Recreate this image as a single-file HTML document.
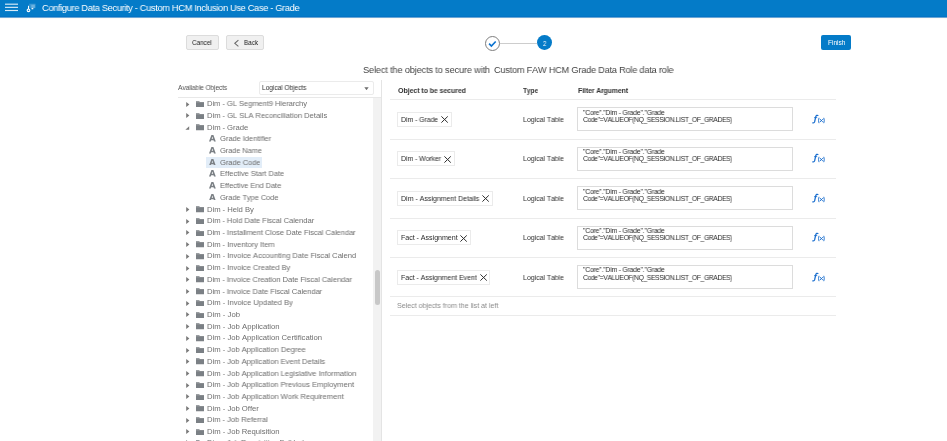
<!DOCTYPE html>
<html><head><meta charset="utf-8"><style>
html,body{margin:0;padding:0;background:#fff;width:947px;height:441px;overflow:hidden;position:relative}
body{font-family:"Liberation Sans",sans-serif;font-kerning:none}
.t{position:absolute;white-space:nowrap;transform-origin:0 0;will-change:transform}
.r{position:absolute}
</style></head><body>
<div class="r" style="left:0.00px;top:0.00px;width:947.00px;height:16.00px;background:#047bc8;"></div>
<div class="r" style="left:0.00px;top:16.00px;width:947.00px;height:1.00px;background:#0474c4;"></div>
<div class="r" style="left:0.00px;top:17.00px;width:947.00px;height:1.00px;background:#6aa6d6;"></div>
<div class="r" style="left:0.00px;top:18.00px;width:947.00px;height:1.00px;background:#fdfbf6;"></div>
<svg class="r" style="left:0;top:0;width:24px;height:16px" viewBox="0 0 24 16"><g stroke="#fff" stroke-opacity=".85" stroke-width="1.15"><line x1="5" y1="4.2" x2="18" y2="4.2"/><line x1="5" y1="7.35" x2="18" y2="7.35"/><line x1="5" y1="10.5" x2="18" y2="10.5"/></g></svg>
<svg class="r" style="left:25px;top:2px;width:12px;height:11px" viewBox="0 0 12 11">
<rect x="4.4" y="1.9" width="6.0" height="4.0" fill="#fff" opacity=".22" stroke="#fff" stroke-opacity=".35" stroke-width=".7"/>
<rect x="6.3" y="2.8" width="3.5" height="3.3" fill="#fff" opacity=".25"/>
<rect x="6.5" y="6.0" width="1.8" height="1.3" fill="#fff" opacity=".95"/>
<line x1="3.5" y1="3.8" x2="3.5" y2="7.2" stroke="#fff" stroke-width="1"/>
<circle cx="3.5" cy="8.3" r="1.35" fill="none" stroke="#fff" stroke-width="1.1"/>
</svg>
<div class="t" style="left:42.00px;top:3.10px;font-size:9.71px;line-height:9.71px;color:#fff;font-weight:normal;letter-spacing:-0.368px;transform:scaleX(0.9580);">Configure Data Security - Custom HCM Inclusion Use Case - Grade</div>
<div class="r" style="left:186.00px;top:35.00px;width:33.00px;height:15.00px;background:#f0f0f0;border:1px solid #dcdcdc;border-radius:2px;box-sizing:border-box;"></div>
<div class="t" style="left:192.20px;top:39.10px;font-size:7.29px;line-height:7.29px;color:#222;font-weight:normal;letter-spacing:0.000px;transform:scaleX(0.8730);">Cancel</div>
<div class="r" style="left:226.00px;top:35.00px;width:38.00px;height:15.00px;background:#f0f0f0;border:1px solid #dcdcdc;border-radius:2px;box-sizing:border-box;"></div>
<svg class="r" style="left:233px;top:39px;width:7px;height:8px" viewBox="0 0 7 8"><polyline points="5.4,1.2 1.8,4.3 5.4,7.4" fill="none" stroke="#6a6a6a" stroke-width="1.1"/></svg>
<div class="t" style="left:243.70px;top:39.10px;font-size:7.29px;line-height:7.29px;color:#222;font-weight:normal;letter-spacing:0.000px;transform:scaleX(0.8698);">Back</div>
<div class="r" style="left:821.00px;top:35.00px;width:30.00px;height:14.50px;background:#047bc8;border-radius:2px;"></div>
<div class="t" style="left:828.00px;top:40.10px;font-size:6.57px;line-height:6.57px;color:#fff;font-weight:normal;letter-spacing:0.000px;">Finish</div>
<div class="r" style="left:500.00px;top:43.00px;width:37.00px;height:1.00px;background:#cdcdcd;"></div>
<div class="r" style="left:484.80px;top:35.80px;width:15.00px;height:15.00px;border:1.1px solid #7e7e7e;border-radius:50%;box-sizing:border-box;background:#fff;"></div>
<svg class="r" style="left:488px;top:39px;width:9px;height:9px" viewBox="0 0 9 9"><polyline points="1.1,4.6 3.4,7.1 7.7,2.5" fill="none" stroke="#0a72d0" stroke-width="1.6"/></svg>
<div class="r" style="left:537.00px;top:35.20px;width:14.80px;height:14.80px;background:#047bc8;border-radius:50%;"></div>
<div class="t" style="left:542.70px;top:40.10px;font-size:7.43px;line-height:7.43px;color:#fff;font-weight:normal;letter-spacing:0.000px;transform:scaleX(0.8232);">2</div>
<div class="t" style="left:363.40px;top:65.10px;font-size:9.43px;line-height:9.43px;color:#444;font-weight:normal;letter-spacing:-0.165px;transform:scaleX(0.9790);">Select the objects to secure with</div>
<div class="t" style="left:494.00px;top:65.10px;font-size:9.43px;line-height:9.43px;color:#444;font-weight:normal;letter-spacing:-0.223px;transform:scaleX(0.9756);">Custom FAW HCM Grade Data Role data role</div>
<div class="t" style="left:178.00px;top:85.10px;font-size:6.86px;line-height:6.86px;color:#555;font-weight:normal;letter-spacing:-0.157px;transform:scaleX(0.9745);">Available Objects</div>
<div class="r" style="left:259.40px;top:80.80px;width:114.60px;height:14.10px;border:1px solid #ebebeb;border-radius:2px;box-sizing:border-box;background:#fff;"></div>
<div class="t" style="left:262.40px;top:85.10px;font-size:6.71px;line-height:6.71px;color:#333;font-weight:normal;letter-spacing:-0.070px;transform:scaleX(0.9885);">Logical Objects</div>
<svg class="r" style="left:364px;top:86.5px;width:5px;height:3.5px" viewBox="0 0 5 3.5"><polygon points="0.3,0.3 4.7,0.3 2.5,3.2" fill="#6f6f6f"/></svg>
<div class="r" style="left:178.00px;top:96.80px;width:204.00px;height:0.80px;background:#e8e8e8;"></div>
<div class="r" style="left:373.00px;top:97.70px;width:8.30px;height:343.30px;background:#f2f2f2;"></div>
<div class="r" style="left:381.20px;top:80.40px;width:1.00px;height:360.60px;background:#e4e4e4;"></div>
<div class="r" style="left:375.00px;top:270.00px;width:5.00px;height:34.50px;background:#c8c8c8;border-radius:2.5px;"></div>
<div class="r" style="left:0;top:97.7px;width:373px;height:343.3px;overflow:hidden">
<div class="r" style="left:0;top:-97.7px;width:373px;height:441px">
<svg class="r" style="left:185.7px;top:101.60px;width:4px;height:5px" viewBox="0 0 4 5"><polygon points="0.2,0.1 3.4,2.5 0.2,4.9" fill="#7a7a7a"/></svg>
<svg class="r" style="left:195.5px;top:100.80px;width:8.5px;height:6.5px" viewBox="0 0 8.5 6.5"><path d="M0,0.2 H3.2 L3.9,1 H8.3 V6.3 H0 Z" fill="#7b8085"/><rect x="0" y="1.5" width="8.3" height="0.35" fill="#fff" opacity=".3"/></svg>
<div class="t" style="left:207.10px;top:100.10px;font-size:7.71px;line-height:7.71px;color:#6e6e6e;font-weight:normal;letter-spacing:-0.078px;transform:scaleX(0.9894);">Dim - GL Segment9 Hierarchy</div>
<svg class="r" style="left:185.7px;top:113.31px;width:4px;height:5px" viewBox="0 0 4 5"><polygon points="0.2,0.1 3.4,2.5 0.2,4.9" fill="#7a7a7a"/></svg>
<svg class="r" style="left:195.5px;top:112.51px;width:8.5px;height:6.5px" viewBox="0 0 8.5 6.5"><path d="M0,0.2 H3.2 L3.9,1 H8.3 V6.3 H0 Z" fill="#7b8085"/><rect x="0" y="1.5" width="8.3" height="0.35" fill="#fff" opacity=".3"/></svg>
<div class="t" style="left:207.10px;top:112.10px;font-size:7.71px;line-height:7.71px;color:#6e6e6e;font-weight:normal;letter-spacing:-0.060px;transform:scaleX(0.9911);">Dim - GL SLA Reconciliation Details</div>
<svg class="r" style="left:185px;top:125.72px;width:4.5px;height:4px" viewBox="0 0 4.5 4"><polygon points="4.2,0.2 4.2,3.8 0.4,3.8" fill="#7a7a7a"/></svg>
<svg class="r" style="left:195.5px;top:124.22px;width:8.5px;height:6.5px" viewBox="0 0 8.5 6.5"><path d="M0,0.2 H3.2 L3.9,1 H8.3 V6.3 H0 Z" fill="#7b8085"/><rect x="0" y="1.5" width="8.3" height="0.35" fill="#fff" opacity=".3"/></svg>
<div class="t" style="left:207.10px;top:124.10px;font-size:7.71px;line-height:7.71px;color:#6e6e6e;font-weight:normal;letter-spacing:-0.072px;transform:scaleX(0.9908);">Dim - Grade</div>
<svg class="r" style="left:209.1px;top:135.33px;width:6.8px;height:6.6px" viewBox="0 0 6.8 6.6"><path fill-rule="evenodd" d="M0,6.6 L2.4,0 L4.4,0 L6.8,6.6 L5.0,6.6 L4.55,5.2 L2.25,5.2 L1.8,6.6 Z M2.7,3.8 L4.1,3.8 L3.4,1.5 Z" fill="#7b8085"/></svg>
<div class="t" style="left:220.00px;top:135.10px;font-size:7.71px;line-height:7.71px;color:#6e6e6e;font-weight:normal;letter-spacing:-0.083px;transform:scaleX(0.9873);">Grade Identifier</div>
<svg class="r" style="left:209.1px;top:147.04px;width:6.8px;height:6.6px" viewBox="0 0 6.8 6.6"><path fill-rule="evenodd" d="M0,6.6 L2.4,0 L4.4,0 L6.8,6.6 L5.0,6.6 L4.55,5.2 L2.25,5.2 L1.8,6.6 Z M2.7,3.8 L4.1,3.8 L3.4,1.5 Z" fill="#7b8085"/></svg>
<div class="t" style="left:220.00px;top:147.10px;font-size:7.71px;line-height:7.71px;color:#6e6e6e;font-weight:normal;letter-spacing:-0.156px;transform:scaleX(0.9828);">Grade Name</div>
<div class="r" style="left:206.00px;top:156.95px;width:56.40px;height:10.80px;background:#e2edf8;"></div>
<svg class="r" style="left:209.1px;top:158.75px;width:6.8px;height:6.6px" viewBox="0 0 6.8 6.6"><path fill-rule="evenodd" d="M0,6.6 L2.4,0 L4.4,0 L6.8,6.6 L5.0,6.6 L4.55,5.2 L2.25,5.2 L1.8,6.6 Z M2.7,3.8 L4.1,3.8 L3.4,1.5 Z" fill="#7b8085"/></svg>
<div class="t" style="left:220.00px;top:159.10px;font-size:7.71px;line-height:7.71px;color:#6e6e6e;font-weight:normal;letter-spacing:-0.110px;transform:scaleX(0.9873);">Grade Code</div>
<svg class="r" style="left:209.1px;top:170.46px;width:6.8px;height:6.6px" viewBox="0 0 6.8 6.6"><path fill-rule="evenodd" d="M0,6.6 L2.4,0 L4.4,0 L6.8,6.6 L5.0,6.6 L4.55,5.2 L2.25,5.2 L1.8,6.6 Z M2.7,3.8 L4.1,3.8 L3.4,1.5 Z" fill="#7b8085"/></svg>
<div class="t" style="left:220.00px;top:170.10px;font-size:7.71px;line-height:7.71px;color:#6e6e6e;font-weight:normal;letter-spacing:-0.071px;transform:scaleX(0.9891);">Effective Start Date</div>
<svg class="r" style="left:209.1px;top:182.17px;width:6.8px;height:6.6px" viewBox="0 0 6.8 6.6"><path fill-rule="evenodd" d="M0,6.6 L2.4,0 L4.4,0 L6.8,6.6 L5.0,6.6 L4.55,5.2 L2.25,5.2 L1.8,6.6 Z M2.7,3.8 L4.1,3.8 L3.4,1.5 Z" fill="#7b8085"/></svg>
<div class="t" style="left:220.00px;top:182.10px;font-size:7.71px;line-height:7.71px;color:#6e6e6e;font-weight:normal;letter-spacing:-0.096px;transform:scaleX(0.9863);">Effective End Date</div>
<svg class="r" style="left:209.1px;top:193.88px;width:6.8px;height:6.6px" viewBox="0 0 6.8 6.6"><path fill-rule="evenodd" d="M0,6.6 L2.4,0 L4.4,0 L6.8,6.6 L5.0,6.6 L4.55,5.2 L2.25,5.2 L1.8,6.6 Z M2.7,3.8 L4.1,3.8 L3.4,1.5 Z" fill="#7b8085"/></svg>
<div class="t" style="left:220.00px;top:194.10px;font-size:7.71px;line-height:7.71px;color:#6e6e6e;font-weight:normal;letter-spacing:-0.128px;transform:scaleX(0.9841);">Grade Type Code</div>
<svg class="r" style="left:185.7px;top:206.99px;width:4px;height:5px" viewBox="0 0 4 5"><polygon points="0.2,0.1 3.4,2.5 0.2,4.9" fill="#7a7a7a"/></svg>
<svg class="r" style="left:195.5px;top:206.19px;width:8.5px;height:6.5px" viewBox="0 0 8.5 6.5"><path d="M0,0.2 H3.2 L3.9,1 H8.3 V6.3 H0 Z" fill="#7b8085"/><rect x="0" y="1.5" width="8.3" height="0.35" fill="#fff" opacity=".3"/></svg>
<div class="t" style="left:207.10px;top:206.10px;font-size:7.71px;line-height:7.71px;color:#6e6e6e;font-weight:normal;letter-spacing:-0.053px;transform:scaleX(0.9928);">Dim - Held By</div>
<svg class="r" style="left:185.7px;top:218.70px;width:4px;height:5px" viewBox="0 0 4 5"><polygon points="0.2,0.1 3.4,2.5 0.2,4.9" fill="#7a7a7a"/></svg>
<svg class="r" style="left:195.5px;top:217.90px;width:8.5px;height:6.5px" viewBox="0 0 8.5 6.5"><path d="M0,0.2 H3.2 L3.9,1 H8.3 V6.3 H0 Z" fill="#7b8085"/><rect x="0" y="1.5" width="8.3" height="0.35" fill="#fff" opacity=".3"/></svg>
<div class="t" style="left:207.10px;top:217.10px;font-size:7.71px;line-height:7.71px;color:#6e6e6e;font-weight:normal;letter-spacing:-0.072px;transform:scaleX(0.9895);">Dim - Hold Date Fiscal Calendar</div>
<svg class="r" style="left:185.7px;top:230.41px;width:4px;height:5px" viewBox="0 0 4 5"><polygon points="0.2,0.1 3.4,2.5 0.2,4.9" fill="#7a7a7a"/></svg>
<svg class="r" style="left:195.5px;top:229.61px;width:8.5px;height:6.5px" viewBox="0 0 8.5 6.5"><path d="M0,0.2 H3.2 L3.9,1 H8.3 V6.3 H0 Z" fill="#7b8085"/><rect x="0" y="1.5" width="8.3" height="0.35" fill="#fff" opacity=".3"/></svg>
<div class="t" style="left:207.10px;top:229.10px;font-size:7.71px;line-height:7.71px;color:#6e6e6e;font-weight:normal;letter-spacing:-0.076px;transform:scaleX(0.9886);">Dim - Installment Close Date Fiscal Calendar</div>
<svg class="r" style="left:185.7px;top:242.12px;width:4px;height:5px" viewBox="0 0 4 5"><polygon points="0.2,0.1 3.4,2.5 0.2,4.9" fill="#7a7a7a"/></svg>
<svg class="r" style="left:195.5px;top:241.32px;width:8.5px;height:6.5px" viewBox="0 0 8.5 6.5"><path d="M0,0.2 H3.2 L3.9,1 H8.3 V6.3 H0 Z" fill="#7b8085"/><rect x="0" y="1.5" width="8.3" height="0.35" fill="#fff" opacity=".3"/></svg>
<div class="t" style="left:207.10px;top:241.10px;font-size:7.71px;line-height:7.71px;color:#6e6e6e;font-weight:normal;letter-spacing:-0.056px;transform:scaleX(0.9917);">Dim - Inventory Item</div>
<svg class="r" style="left:185.7px;top:253.83px;width:4px;height:5px" viewBox="0 0 4 5"><polygon points="0.2,0.1 3.4,2.5 0.2,4.9" fill="#7a7a7a"/></svg>
<svg class="r" style="left:195.5px;top:253.03px;width:8.5px;height:6.5px" viewBox="0 0 8.5 6.5"><path d="M0,0.2 H3.2 L3.9,1 H8.3 V6.3 H0 Z" fill="#7b8085"/><rect x="0" y="1.5" width="8.3" height="0.35" fill="#fff" opacity=".3"/></svg>
<div class="t" style="left:207.10px;top:252.10px;font-size:7.71px;line-height:7.71px;color:#6e6e6e;font-weight:normal;letter-spacing:-0.051px;transform:scaleX(0.9924);">Dim - Invoice Accounting Date Fiscal Calend</div>
<svg class="r" style="left:185.7px;top:265.54px;width:4px;height:5px" viewBox="0 0 4 5"><polygon points="0.2,0.1 3.4,2.5 0.2,4.9" fill="#7a7a7a"/></svg>
<svg class="r" style="left:195.5px;top:264.74px;width:8.5px;height:6.5px" viewBox="0 0 8.5 6.5"><path d="M0,0.2 H3.2 L3.9,1 H8.3 V6.3 H0 Z" fill="#7b8085"/><rect x="0" y="1.5" width="8.3" height="0.35" fill="#fff" opacity=".3"/></svg>
<div class="t" style="left:207.10px;top:264.10px;font-size:7.71px;line-height:7.71px;color:#6e6e6e;font-weight:normal;letter-spacing:-0.063px;transform:scaleX(0.9908);">Dim - Invoice Created By</div>
<svg class="r" style="left:185.7px;top:277.25px;width:4px;height:5px" viewBox="0 0 4 5"><polygon points="0.2,0.1 3.4,2.5 0.2,4.9" fill="#7a7a7a"/></svg>
<svg class="r" style="left:195.5px;top:276.45px;width:8.5px;height:6.5px" viewBox="0 0 8.5 6.5"><path d="M0,0.2 H3.2 L3.9,1 H8.3 V6.3 H0 Z" fill="#7b8085"/><rect x="0" y="1.5" width="8.3" height="0.35" fill="#fff" opacity=".3"/></svg>
<div class="t" style="left:207.10px;top:276.10px;font-size:7.71px;line-height:7.71px;color:#6e6e6e;font-weight:normal;letter-spacing:-0.082px;transform:scaleX(0.9877);">Dim - Invoice Creation Date Fiscal Calendar</div>
<svg class="r" style="left:185.7px;top:288.96px;width:4px;height:5px" viewBox="0 0 4 5"><polygon points="0.2,0.1 3.4,2.5 0.2,4.9" fill="#7a7a7a"/></svg>
<svg class="r" style="left:195.5px;top:288.16px;width:8.5px;height:6.5px" viewBox="0 0 8.5 6.5"><path d="M0,0.2 H3.2 L3.9,1 H8.3 V6.3 H0 Z" fill="#7b8085"/><rect x="0" y="1.5" width="8.3" height="0.35" fill="#fff" opacity=".3"/></svg>
<div class="t" style="left:207.10px;top:288.10px;font-size:7.71px;line-height:7.71px;color:#6e6e6e;font-weight:normal;letter-spacing:-0.079px;transform:scaleX(0.9883);">Dim - Invoice Date Fiscal Calendar</div>
<svg class="r" style="left:185.7px;top:300.67px;width:4px;height:5px" viewBox="0 0 4 5"><polygon points="0.2,0.1 3.4,2.5 0.2,4.9" fill="#7a7a7a"/></svg>
<svg class="r" style="left:195.5px;top:299.87px;width:8.5px;height:6.5px" viewBox="0 0 8.5 6.5"><path d="M0,0.2 H3.2 L3.9,1 H8.3 V6.3 H0 Z" fill="#7b8085"/><rect x="0" y="1.5" width="8.3" height="0.35" fill="#fff" opacity=".3"/></svg>
<div class="t" style="left:207.10px;top:299.10px;font-size:7.71px;line-height:7.71px;color:#6e6e6e;font-weight:normal;letter-spacing:-0.041px;transform:scaleX(0.9941);">Dim - Invoice Updated By</div>
<svg class="r" style="left:185.7px;top:312.38px;width:4px;height:5px" viewBox="0 0 4 5"><polygon points="0.2,0.1 3.4,2.5 0.2,4.9" fill="#7a7a7a"/></svg>
<svg class="r" style="left:195.5px;top:311.58px;width:8.5px;height:6.5px" viewBox="0 0 8.5 6.5"><path d="M0,0.2 H3.2 L3.9,1 H8.3 V6.3 H0 Z" fill="#7b8085"/><rect x="0" y="1.5" width="8.3" height="0.35" fill="#fff" opacity=".3"/></svg>
<div class="t" style="left:207.10px;top:311.10px;font-size:7.71px;line-height:7.71px;color:#6e6e6e;font-weight:normal;letter-spacing:0.008px;">Dim - Job</div>
<svg class="r" style="left:185.7px;top:324.09px;width:4px;height:5px" viewBox="0 0 4 5"><polygon points="0.2,0.1 3.4,2.5 0.2,4.9" fill="#7a7a7a"/></svg>
<svg class="r" style="left:195.5px;top:323.29px;width:8.5px;height:6.5px" viewBox="0 0 8.5 6.5"><path d="M0,0.2 H3.2 L3.9,1 H8.3 V6.3 H0 Z" fill="#7b8085"/><rect x="0" y="1.5" width="8.3" height="0.35" fill="#fff" opacity=".3"/></svg>
<div class="t" style="left:207.10px;top:323.10px;font-size:7.71px;line-height:7.71px;color:#6e6e6e;font-weight:normal;letter-spacing:-0.008px;">Dim - Job Application</div>
<svg class="r" style="left:185.7px;top:335.80px;width:4px;height:5px" viewBox="0 0 4 5"><polygon points="0.2,0.1 3.4,2.5 0.2,4.9" fill="#7a7a7a"/></svg>
<svg class="r" style="left:195.5px;top:335.00px;width:8.5px;height:6.5px" viewBox="0 0 8.5 6.5"><path d="M0,0.2 H3.2 L3.9,1 H8.3 V6.3 H0 Z" fill="#7b8085"/><rect x="0" y="1.5" width="8.3" height="0.35" fill="#fff" opacity=".3"/></svg>
<div class="t" style="left:207.10px;top:334.10px;font-size:7.71px;line-height:7.71px;color:#6e6e6e;font-weight:normal;letter-spacing:-0.016px;">Dim - Job Application Certification</div>
<svg class="r" style="left:185.7px;top:347.51px;width:4px;height:5px" viewBox="0 0 4 5"><polygon points="0.2,0.1 3.4,2.5 0.2,4.9" fill="#7a7a7a"/></svg>
<svg class="r" style="left:195.5px;top:346.71px;width:8.5px;height:6.5px" viewBox="0 0 8.5 6.5"><path d="M0,0.2 H3.2 L3.9,1 H8.3 V6.3 H0 Z" fill="#7b8085"/><rect x="0" y="1.5" width="8.3" height="0.35" fill="#fff" opacity=".3"/></svg>
<div class="t" style="left:207.10px;top:346.10px;font-size:7.71px;line-height:7.71px;color:#6e6e6e;font-weight:normal;letter-spacing:-0.036px;transform:scaleX(0.9947);">Dim - Job Application Degree</div>
<svg class="r" style="left:185.7px;top:359.22px;width:4px;height:5px" viewBox="0 0 4 5"><polygon points="0.2,0.1 3.4,2.5 0.2,4.9" fill="#7a7a7a"/></svg>
<svg class="r" style="left:195.5px;top:358.42px;width:8.5px;height:6.5px" viewBox="0 0 8.5 6.5"><path d="M0,0.2 H3.2 L3.9,1 H8.3 V6.3 H0 Z" fill="#7b8085"/><rect x="0" y="1.5" width="8.3" height="0.35" fill="#fff" opacity=".3"/></svg>
<div class="t" style="left:207.10px;top:358.10px;font-size:7.71px;line-height:7.71px;color:#6e6e6e;font-weight:normal;letter-spacing:-0.041px;transform:scaleX(0.9937);">Dim - Job Application Event Details</div>
<svg class="r" style="left:185.7px;top:370.93px;width:4px;height:5px" viewBox="0 0 4 5"><polygon points="0.2,0.1 3.4,2.5 0.2,4.9" fill="#7a7a7a"/></svg>
<svg class="r" style="left:195.5px;top:370.13px;width:8.5px;height:6.5px" viewBox="0 0 8.5 6.5"><path d="M0,0.2 H3.2 L3.9,1 H8.3 V6.3 H0 Z" fill="#7b8085"/><rect x="0" y="1.5" width="8.3" height="0.35" fill="#fff" opacity=".3"/></svg>
<div class="t" style="left:207.10px;top:370.10px;font-size:7.71px;line-height:7.71px;color:#6e6e6e;font-weight:normal;letter-spacing:-0.037px;transform:scaleX(0.9943);">Dim - Job Application Legislative Information</div>
<svg class="r" style="left:185.7px;top:382.64px;width:4px;height:5px" viewBox="0 0 4 5"><polygon points="0.2,0.1 3.4,2.5 0.2,4.9" fill="#7a7a7a"/></svg>
<svg class="r" style="left:195.5px;top:381.84px;width:8.5px;height:6.5px" viewBox="0 0 8.5 6.5"><path d="M0,0.2 H3.2 L3.9,1 H8.3 V6.3 H0 Z" fill="#7b8085"/><rect x="0" y="1.5" width="8.3" height="0.35" fill="#fff" opacity=".3"/></svg>
<div class="t" style="left:207.10px;top:381.10px;font-size:7.71px;line-height:7.71px;color:#6e6e6e;font-weight:normal;letter-spacing:-0.044px;transform:scaleX(0.9936);">Dim - Job Application Previous Employment</div>
<svg class="r" style="left:185.7px;top:394.35px;width:4px;height:5px" viewBox="0 0 4 5"><polygon points="0.2,0.1 3.4,2.5 0.2,4.9" fill="#7a7a7a"/></svg>
<svg class="r" style="left:195.5px;top:393.55px;width:8.5px;height:6.5px" viewBox="0 0 8.5 6.5"><path d="M0,0.2 H3.2 L3.9,1 H8.3 V6.3 H0 Z" fill="#7b8085"/><rect x="0" y="1.5" width="8.3" height="0.35" fill="#fff" opacity=".3"/></svg>
<div class="t" style="left:207.10px;top:393.10px;font-size:7.71px;line-height:7.71px;color:#6e6e6e;font-weight:normal;letter-spacing:-0.042px;transform:scaleX(0.9940);">Dim - Job Application Work Requirement</div>
<svg class="r" style="left:185.7px;top:406.06px;width:4px;height:5px" viewBox="0 0 4 5"><polygon points="0.2,0.1 3.4,2.5 0.2,4.9" fill="#7a7a7a"/></svg>
<svg class="r" style="left:195.5px;top:405.26px;width:8.5px;height:6.5px" viewBox="0 0 8.5 6.5"><path d="M0,0.2 H3.2 L3.9,1 H8.3 V6.3 H0 Z" fill="#7b8085"/><rect x="0" y="1.5" width="8.3" height="0.35" fill="#fff" opacity=".3"/></svg>
<div class="t" style="left:207.10px;top:405.10px;font-size:7.71px;line-height:7.71px;color:#6e6e6e;font-weight:normal;letter-spacing:-0.026px;transform:scaleX(0.9963);">Dim - Job Offer</div>
<svg class="r" style="left:185.7px;top:417.77px;width:4px;height:5px" viewBox="0 0 4 5"><polygon points="0.2,0.1 3.4,2.5 0.2,4.9" fill="#7a7a7a"/></svg>
<svg class="r" style="left:195.5px;top:416.97px;width:8.5px;height:6.5px" viewBox="0 0 8.5 6.5"><path d="M0,0.2 H3.2 L3.9,1 H8.3 V6.3 H0 Z" fill="#7b8085"/><rect x="0" y="1.5" width="8.3" height="0.35" fill="#fff" opacity=".3"/></svg>
<div class="t" style="left:207.10px;top:416.10px;font-size:7.71px;line-height:7.71px;color:#6e6e6e;font-weight:normal;letter-spacing:-0.068px;transform:scaleX(0.9900);">Dim - Job Referral</div>
<svg class="r" style="left:185.7px;top:429.48px;width:4px;height:5px" viewBox="0 0 4 5"><polygon points="0.2,0.1 3.4,2.5 0.2,4.9" fill="#7a7a7a"/></svg>
<svg class="r" style="left:195.5px;top:428.68px;width:8.5px;height:6.5px" viewBox="0 0 8.5 6.5"><path d="M0,0.2 H3.2 L3.9,1 H8.3 V6.3 H0 Z" fill="#7b8085"/><rect x="0" y="1.5" width="8.3" height="0.35" fill="#fff" opacity=".3"/></svg>
<div class="t" style="left:207.10px;top:428.10px;font-size:7.71px;line-height:7.71px;color:#6e6e6e;font-weight:normal;letter-spacing:-0.036px;transform:scaleX(0.9947);">Dim - Job Requisition</div>
<svg class="r" style="left:185.7px;top:440.40px;width:4px;height:5px" viewBox="0 0 4 5"><polygon points="0.2,0.1 3.4,2.5 0.2,4.9" fill="#7a7a7a"/></svg>
<svg class="r" style="left:195.5px;top:439.60px;width:8.5px;height:6.5px" viewBox="0 0 8.5 6.5"><path d="M0,0.2 H3.2 L3.9,1 H8.3 V6.3 H0 Z" fill="#7b8085"/><rect x="0" y="1.5" width="8.3" height="0.35" fill="#fff" opacity=".3"/></svg>
<div class="t" style="left:207.10px;top:439.10px;font-size:7.71px;line-height:7.71px;color:#6e6e6e;font-weight:normal;letter-spacing:-0.086px;transform:scaleX(0.9868);">Dim - Job Requisition Full Index</div>
</div></div>
<div class="t" style="left:397.50px;top:88.10px;font-size:7.14px;line-height:7.14px;color:#333;font-weight:bold;letter-spacing:-0.081px;transform:scaleX(0.9883);">Object to be secured</div>
<div class="t" style="left:523.30px;top:88.10px;font-size:7.14px;line-height:7.14px;color:#333;font-weight:bold;letter-spacing:0.000px;transform:scaleX(0.9106);">Type</div>
<div class="t" style="left:577.80px;top:88.10px;font-size:7.14px;line-height:7.14px;color:#333;font-weight:bold;letter-spacing:-0.135px;transform:scaleX(0.9807);">Filter Argument</div>
<div class="r" style="left:390.00px;top:99.20px;width:445.50px;height:1.00px;background:#ebebeb;"></div>
<div class="r" style="left:397.40px;top:111.80px;width:54.40px;height:15.00px;border:1px solid #ebebeb;box-sizing:border-box;background:#fff;"></div>
<div class="t" style="left:401.10px;top:117.10px;font-size:7.14px;line-height:7.14px;color:#2a2a2a;font-weight:normal;letter-spacing:-0.110px;transform:scaleX(0.9848);">Dim - Grade</div>
<svg class="r" style="left:441.10px;top:116.30px;width:7.2px;height:7px" viewBox="0 0 7.2 7"><path d="M0.4,0.4 L6.8,6.6 M6.8,0.4 L0.4,6.6" stroke="#2e2e2e" stroke-width="1.0"/></svg>
<div class="t" style="left:522.90px;top:117.10px;font-size:7.14px;line-height:7.14px;color:#303030;font-weight:normal;letter-spacing:-0.079px;transform:scaleX(0.9877);">Logical Table</div>
<div class="r" style="left:577.40px;top:107.20px;width:215.20px;height:24.00px;border:1px solid #dcdcdc;box-sizing:border-box;background:#fff;"></div>
<div class="t" style="left:583.10px;top:110.10px;font-size:7.14px;line-height:7.14px;color:#2a2a2a;font-weight:normal;letter-spacing:-0.224px;transform:scaleX(0.9654);">"Core"."Dim - Grade"."Grade</div>
<div class="t" style="left:583.10px;top:117.10px;font-size:7.14px;line-height:7.14px;color:#2a2a2a;font-weight:normal;letter-spacing:-0.405px;transform:scaleX(0.9508);">Code"=VALUEOF(NQ_SESSION.LIST_OF_GRADES)</div>
<svg class="r" style="left:808px;top:112.00px;width:20px;height:14px" viewBox="0 0 20 14"><g fill="none" stroke="#1b6fcf" stroke-linecap="round"><path d="M9.9,3.5 C9.1,3.0 8.1,3.4 7.8,4.6 L6.6,9.9 C6.3,10.8 5.6,11.0 4.8,10.8" stroke-width="1.3"/><path d="M6.5,5.6 H8.8" stroke-width="0.85"/><path d="M10.9,6.2 Q10.0,8.5 10.9,10.8" stroke-width="0.95"/><path d="M15.9,6.2 Q16.8,8.5 15.9,10.8" stroke-width="0.95"/><path d="M12.3,7.5 L14.5,9.6 M14.5,7.5 L12.3,9.6" stroke-width="1.0"/></g></svg>
<div class="r" style="left:390.00px;top:138.65px;width:445.50px;height:1.00px;background:#ebebeb;"></div>
<div class="r" style="left:397.40px;top:151.25px;width:57.20px;height:15.00px;border:1px solid #ebebeb;box-sizing:border-box;background:#fff;"></div>
<div class="t" style="left:401.10px;top:156.10px;font-size:7.14px;line-height:7.14px;color:#2a2a2a;font-weight:normal;letter-spacing:-0.114px;transform:scaleX(0.9839);">Dim - Worker</div>
<svg class="r" style="left:443.90px;top:155.75px;width:7.2px;height:7px" viewBox="0 0 7.2 7"><path d="M0.4,0.4 L6.8,6.6 M6.8,0.4 L0.4,6.6" stroke="#2e2e2e" stroke-width="1.0"/></svg>
<div class="t" style="left:522.90px;top:156.10px;font-size:7.14px;line-height:7.14px;color:#303030;font-weight:normal;letter-spacing:-0.079px;transform:scaleX(0.9877);">Logical Table</div>
<div class="r" style="left:577.40px;top:146.65px;width:215.20px;height:24.00px;border:1px solid #dcdcdc;box-sizing:border-box;background:#fff;"></div>
<div class="t" style="left:583.10px;top:149.10px;font-size:7.14px;line-height:7.14px;color:#2a2a2a;font-weight:normal;letter-spacing:-0.224px;transform:scaleX(0.9654);">"Core"."Dim - Grade"."Grade</div>
<div class="t" style="left:583.10px;top:156.10px;font-size:7.14px;line-height:7.14px;color:#2a2a2a;font-weight:normal;letter-spacing:-0.405px;transform:scaleX(0.9508);">Code"=VALUEOF(NQ_SESSION.LIST_OF_GRADES)</div>
<svg class="r" style="left:808px;top:151.45px;width:20px;height:14px" viewBox="0 0 20 14"><g fill="none" stroke="#1b6fcf" stroke-linecap="round"><path d="M9.9,3.5 C9.1,3.0 8.1,3.4 7.8,4.6 L6.6,9.9 C6.3,10.8 5.6,11.0 4.8,10.8" stroke-width="1.3"/><path d="M6.5,5.6 H8.8" stroke-width="0.85"/><path d="M10.9,6.2 Q10.0,8.5 10.9,10.8" stroke-width="0.95"/><path d="M15.9,6.2 Q16.8,8.5 15.9,10.8" stroke-width="0.95"/><path d="M12.3,7.5 L14.5,9.6 M14.5,7.5 L12.3,9.6" stroke-width="1.0"/></g></svg>
<div class="r" style="left:390.00px;top:178.10px;width:445.50px;height:1.00px;background:#ebebeb;"></div>
<div class="r" style="left:397.40px;top:190.70px;width:95.30px;height:15.00px;border:1px solid #ebebeb;box-sizing:border-box;background:#fff;"></div>
<div class="t" style="left:401.10px;top:196.10px;font-size:7.14px;line-height:7.14px;color:#2a2a2a;font-weight:normal;letter-spacing:-0.048px;transform:scaleX(0.9926);">Dim - Assignment Details</div>
<svg class="r" style="left:482.00px;top:195.20px;width:7.2px;height:7px" viewBox="0 0 7.2 7"><path d="M0.4,0.4 L6.8,6.6 M6.8,0.4 L0.4,6.6" stroke="#2e2e2e" stroke-width="1.0"/></svg>
<div class="t" style="left:522.90px;top:196.10px;font-size:7.14px;line-height:7.14px;color:#303030;font-weight:normal;letter-spacing:-0.079px;transform:scaleX(0.9877);">Logical Table</div>
<div class="r" style="left:577.40px;top:186.10px;width:215.20px;height:24.00px;border:1px solid #dcdcdc;box-sizing:border-box;background:#fff;"></div>
<div class="t" style="left:583.10px;top:189.10px;font-size:7.14px;line-height:7.14px;color:#2a2a2a;font-weight:normal;letter-spacing:-0.224px;transform:scaleX(0.9654);">"Core"."Dim - Grade"."Grade</div>
<div class="t" style="left:583.10px;top:196.10px;font-size:7.14px;line-height:7.14px;color:#2a2a2a;font-weight:normal;letter-spacing:-0.405px;transform:scaleX(0.9508);">Code"=VALUEOF(NQ_SESSION.LIST_OF_GRADES)</div>
<svg class="r" style="left:808px;top:190.90px;width:20px;height:14px" viewBox="0 0 20 14"><g fill="none" stroke="#1b6fcf" stroke-linecap="round"><path d="M9.9,3.5 C9.1,3.0 8.1,3.4 7.8,4.6 L6.6,9.9 C6.3,10.8 5.6,11.0 4.8,10.8" stroke-width="1.3"/><path d="M6.5,5.6 H8.8" stroke-width="0.85"/><path d="M10.9,6.2 Q10.0,8.5 10.9,10.8" stroke-width="0.95"/><path d="M15.9,6.2 Q16.8,8.5 15.9,10.8" stroke-width="0.95"/><path d="M12.3,7.5 L14.5,9.6 M14.5,7.5 L12.3,9.6" stroke-width="1.0"/></g></svg>
<div class="r" style="left:390.00px;top:217.55px;width:445.50px;height:1.00px;background:#ebebeb;"></div>
<div class="r" style="left:397.40px;top:230.15px;width:73.20px;height:15.00px;border:1px solid #ebebeb;box-sizing:border-box;background:#fff;"></div>
<div class="t" style="left:401.10px;top:235.10px;font-size:7.14px;line-height:7.14px;color:#2a2a2a;font-weight:normal;letter-spacing:-0.047px;transform:scaleX(0.9929);">Fact - Assignment</div>
<svg class="r" style="left:459.90px;top:234.65px;width:7.2px;height:7px" viewBox="0 0 7.2 7"><path d="M0.4,0.4 L6.8,6.6 M6.8,0.4 L0.4,6.6" stroke="#2e2e2e" stroke-width="1.0"/></svg>
<div class="t" style="left:522.90px;top:235.10px;font-size:7.14px;line-height:7.14px;color:#303030;font-weight:normal;letter-spacing:-0.079px;transform:scaleX(0.9877);">Logical Table</div>
<div class="r" style="left:577.40px;top:225.55px;width:215.20px;height:24.00px;border:1px solid #dcdcdc;box-sizing:border-box;background:#fff;"></div>
<div class="t" style="left:583.10px;top:228.10px;font-size:7.14px;line-height:7.14px;color:#2a2a2a;font-weight:normal;letter-spacing:-0.224px;transform:scaleX(0.9654);">"Core"."Dim - Grade"."Grade</div>
<div class="t" style="left:583.10px;top:235.10px;font-size:7.14px;line-height:7.14px;color:#2a2a2a;font-weight:normal;letter-spacing:-0.405px;transform:scaleX(0.9508);">Code"=VALUEOF(NQ_SESSION.LIST_OF_GRADES)</div>
<svg class="r" style="left:808px;top:230.35px;width:20px;height:14px" viewBox="0 0 20 14"><g fill="none" stroke="#1b6fcf" stroke-linecap="round"><path d="M9.9,3.5 C9.1,3.0 8.1,3.4 7.8,4.6 L6.6,9.9 C6.3,10.8 5.6,11.0 4.8,10.8" stroke-width="1.3"/><path d="M6.5,5.6 H8.8" stroke-width="0.85"/><path d="M10.9,6.2 Q10.0,8.5 10.9,10.8" stroke-width="0.95"/><path d="M15.9,6.2 Q16.8,8.5 15.9,10.8" stroke-width="0.95"/><path d="M12.3,7.5 L14.5,9.6 M14.5,7.5 L12.3,9.6" stroke-width="1.0"/></g></svg>
<div class="r" style="left:390.00px;top:257.00px;width:445.50px;height:1.00px;background:#ebebeb;"></div>
<div class="r" style="left:397.40px;top:269.60px;width:92.80px;height:15.00px;border:1px solid #ebebeb;box-sizing:border-box;background:#fff;"></div>
<div class="t" style="left:401.10px;top:275.10px;font-size:7.14px;line-height:7.14px;color:#2a2a2a;font-weight:normal;letter-spacing:-0.054px;transform:scaleX(0.9918);">Fact - Assignment Event</div>
<svg class="r" style="left:479.50px;top:274.10px;width:7.2px;height:7px" viewBox="0 0 7.2 7"><path d="M0.4,0.4 L6.8,6.6 M6.8,0.4 L0.4,6.6" stroke="#2e2e2e" stroke-width="1.0"/></svg>
<div class="t" style="left:522.90px;top:275.10px;font-size:7.14px;line-height:7.14px;color:#303030;font-weight:normal;letter-spacing:-0.079px;transform:scaleX(0.9877);">Logical Table</div>
<div class="r" style="left:577.40px;top:265.00px;width:215.20px;height:24.00px;border:1px solid #dcdcdc;box-sizing:border-box;background:#fff;"></div>
<div class="t" style="left:583.10px;top:267.10px;font-size:7.14px;line-height:7.14px;color:#2a2a2a;font-weight:normal;letter-spacing:-0.224px;transform:scaleX(0.9654);">"Core"."Dim - Grade"."Grade</div>
<div class="t" style="left:583.10px;top:275.10px;font-size:7.14px;line-height:7.14px;color:#2a2a2a;font-weight:normal;letter-spacing:-0.405px;transform:scaleX(0.9508);">Code"=VALUEOF(NQ_SESSION.LIST_OF_GRADES)</div>
<svg class="r" style="left:808px;top:269.80px;width:20px;height:14px" viewBox="0 0 20 14"><g fill="none" stroke="#1b6fcf" stroke-linecap="round"><path d="M9.9,3.5 C9.1,3.0 8.1,3.4 7.8,4.6 L6.6,9.9 C6.3,10.8 5.6,11.0 4.8,10.8" stroke-width="1.3"/><path d="M6.5,5.6 H8.8" stroke-width="0.85"/><path d="M10.9,6.2 Q10.0,8.5 10.9,10.8" stroke-width="0.95"/><path d="M15.9,6.2 Q16.8,8.5 15.9,10.8" stroke-width="0.95"/><path d="M12.3,7.5 L14.5,9.6 M14.5,7.5 L12.3,9.6" stroke-width="1.0"/></g></svg>
<div class="r" style="left:390.00px;top:296.45px;width:445.50px;height:1.00px;background:#ebebeb;"></div>
<div class="t" style="left:397.10px;top:302.10px;font-size:7.29px;line-height:7.29px;color:#8c8c8c;font-weight:normal;letter-spacing:-0.066px;transform:scaleX(0.9881);">Select objects from the list at left</div>
<div class="r" style="left:390.00px;top:314.90px;width:445.50px;height:1.00px;background:#ebebeb;"></div>
</body></html>
